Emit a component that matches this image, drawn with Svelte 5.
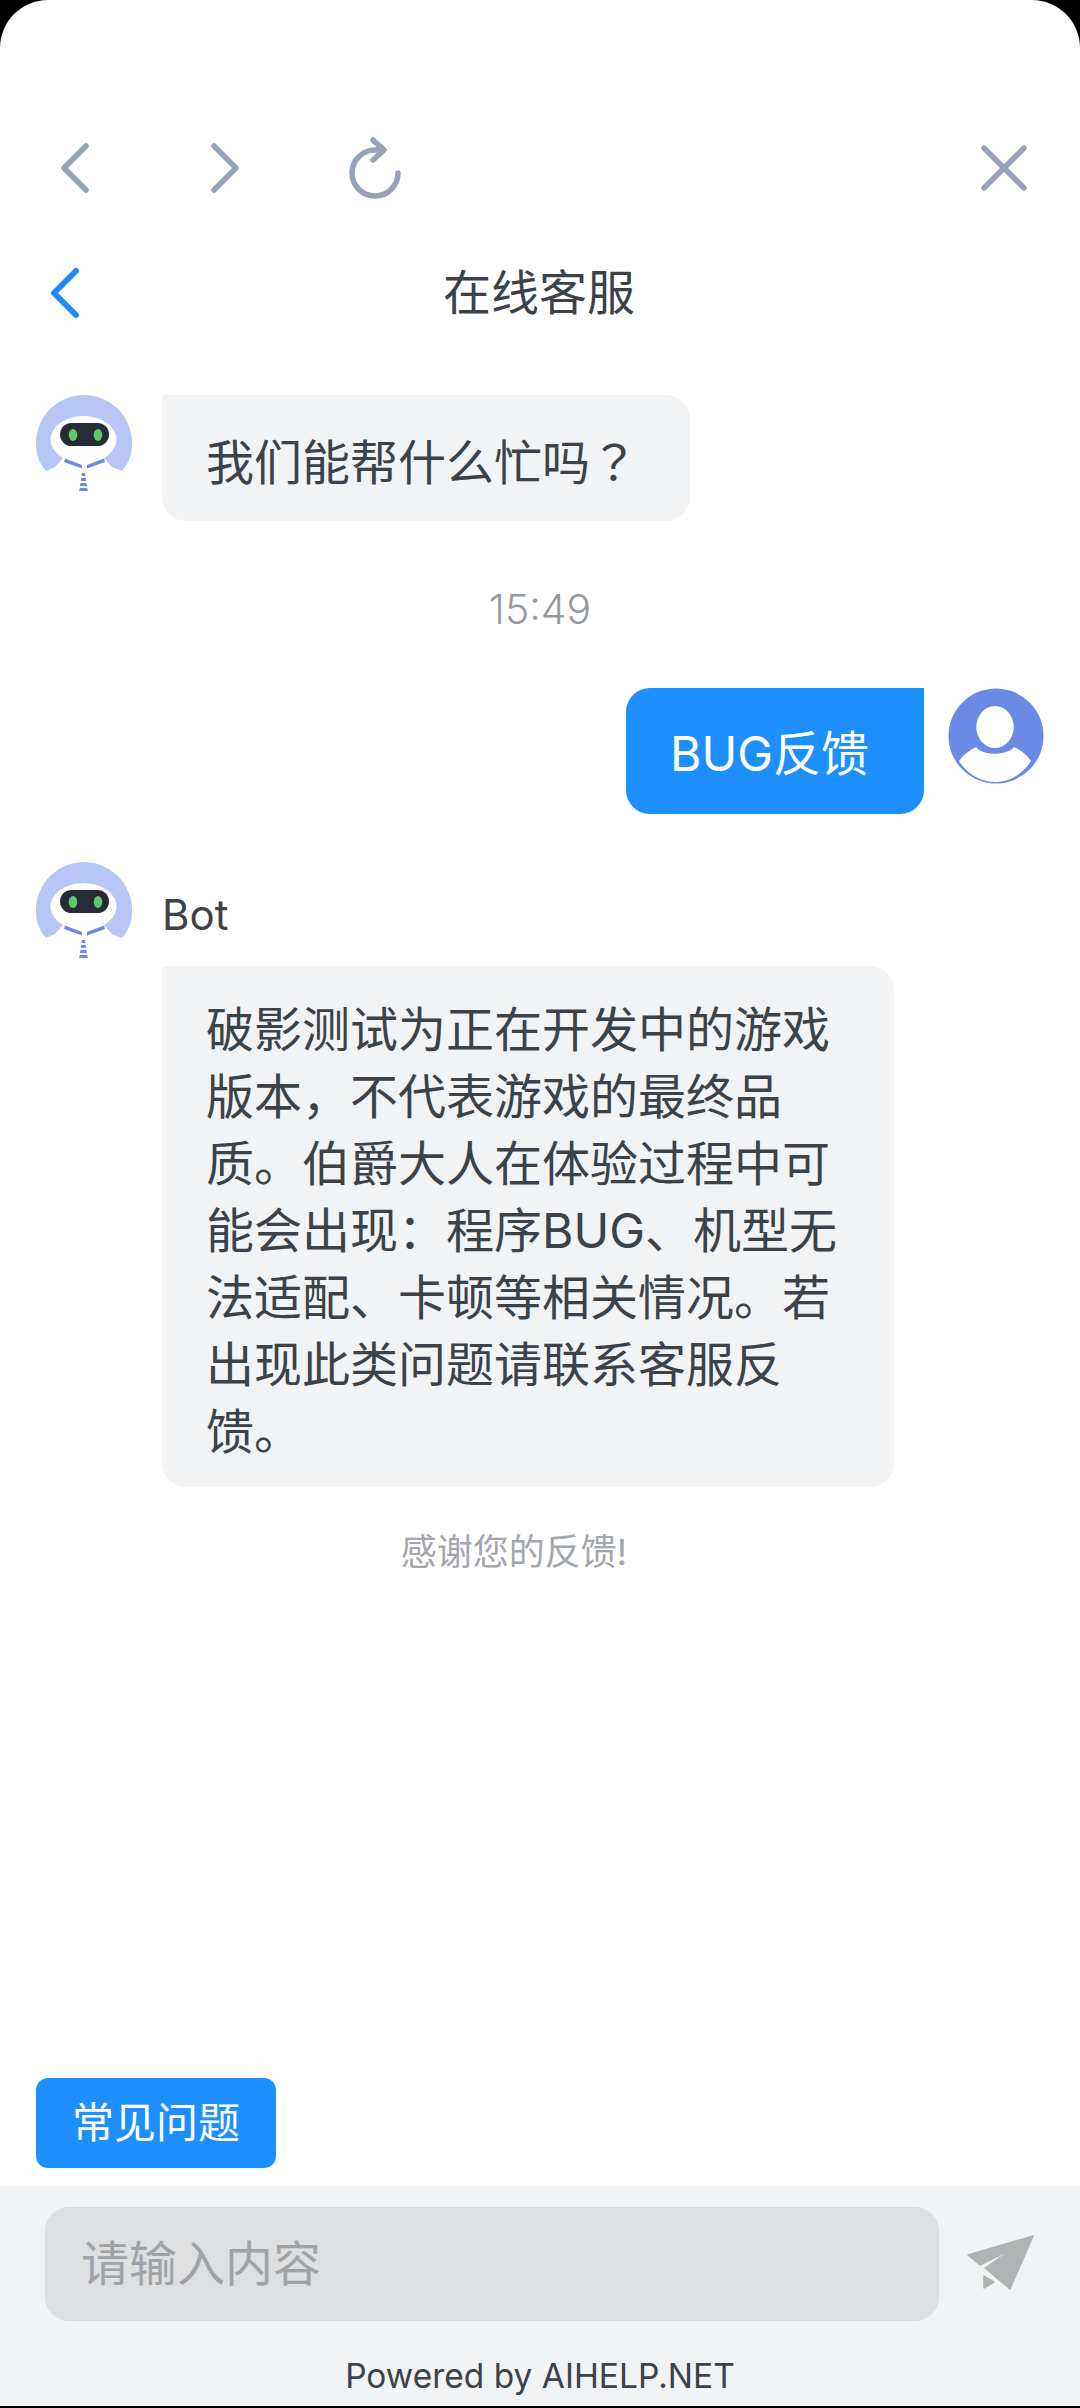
<script>
  const lines = ['破影测试为正在开发中的游戏', '版本，不代表游戏的最终品', '质。伯爵大人在体验过程中可', '能会出现：程序BUG、机型无', '法适配、卡顿等相关情况。若', '出现此类问题请联系客服反', '馈。'];
</script>

{#snippet bot()}
  <svg class="avatar" viewBox="0 0 96 96" aria-hidden="true">
    <path class="bot-halo" d="M10 76 C2 67 0 58 0 48 A48 48 0 0 1 96 48 C96 58 94 67 86 76 L76 72 L68 63 A33 23.5 0 1 0 27 63 L19 72 Z" />
    <rect class="bot-visor" x="24" y="28" width="49" height="23" rx="11.5" />
    <ellipse class="bot-eye" cx="37" cy="40" rx="4.3" ry="6" />
    <ellipse class="bot-eye" cx="62" cy="40" rx="4.3" ry="6" />
    <path class="bot-mark" d="M29 63.5 L46 70 V73.5 L28 67 Z M51 70 L68 63.5 L69 67 L51 73.5 Z" />
    <path class="bot-mark" d="M46 78 H49 L49.5 81 H45.5 Z M45.3 83 H49.7 L50.2 86 H44.8 Z M44.6 88 H50.4 L51 91 H44 Z M43.8 93 H51.2 L52 96 H43 Z" />
  </svg>
{/snippet}

<div class="screen">
  <div class="toolbar">
    <svg class="tool tool-left" viewBox="0 0 30 52"><path d="M26 4 L4 26 L26 48" /></svg>
    <svg class="tool tool-right" viewBox="0 0 30 52"><path d="M4 4 L26 26 L4 48" /></svg>
    <svg class="tool tool-reload" viewBox="0 0 54 62"><path d="M49 36 A23 23 0 1 1 26 13 L34 13 M24 3 L35 13 L24 23" /></svg>
    <span class="spacer"></span>
    <svg class="tool tool-close" viewBox="0 0 48 48"><path d="M4 4 L44 44 M44 4 L4 44" /></svg>
  </div>

  <header class="title-row">
    <svg class="back" viewBox="0 0 30 52"><path d="M26 4 L4 26 L26 48" /></svg>
    <h1>在线客服</h1>
  </header>

  <main class="chat">
    <div class="row first">
      {@render bot()}
      <div class="bubble short">我们能帮什么忙吗<span class="q">？</span></div>
    </div>

    <div class="time">15:49</div>

    <div class="row mine">
      <div class="bubble user">BUG反馈</div>
      <svg class="avatar" viewBox="0 0 96 96" aria-hidden="true">
        <circle cx="48" cy="48" r="47.5" fill="#6a8ae6" />
        <ellipse cx="47" cy="39" rx="18.7" ry="21" fill="#fff" />
        <path d="M11 73 C16 66 22 62 28 59 C34 68 59 68 66 59 C73 62 78 66 83 73 C75 86 61 94 47 94 C33 94 19 86 11 73 Z" fill="#fff" />
      </svg>
    </div>

    <div class="row bot-row">
      {@render bot()}
      <div class="bot-body">
        <div class="name">Bot</div>
        <div class="bubble long">
          {#each lines as line}
            <div>{line}</div>
          {/each}
        </div>
      </div>
    </div>

    <div class="thanks">感谢您的反馈!</div>
  </main>

  <div class="quick-wrap"><button class="quick">常见问题</button></div>

  <footer class="composer">
    <div class="input-row">
      <div class="input">请输入内容</div>
      <svg class="send" viewBox="0 0 68 58" aria-hidden="true">
        <path d="M66 1 L1 20 L13 30 L47 13 L18 33 L43 54 Z" />
        <path d="M17 41 L17 53 L27 47 Z" />
      </svg>
    </div>
    <div class="powered">Powered by AIHELP.NET</div>
  </footer>
</div>

<style>
  :global(body) {
    margin: 0;
    background: #000;
  }

  .screen {
    width: 1080px;
    height: 2406px;
    background: #fff;
    border-radius: 48px 48px 0 0;
    overflow: hidden;
    display: flex;
    flex-direction: column;
    font-family: Inter, "Noto Sans CJK SC", sans-serif;
    color: #3c4248;
  }

  .toolbar {
    height: 84px;
    margin-top: 126px;
    display: flex;
    align-items: center;
    flex: none;
  }

  .tool {
    fill: none;
    stroke: #98a2b6;
    stroke-width: 5.5;
    stroke-linecap: round;
    stroke-linejoin: round;
    flex: none;
  }

  .tool-left {
    width: 30px;
    height: 52px;
    margin-left: 60px;
  }

  .tool-right {
    width: 30px;
    height: 52px;
    margin-left: 120px;
  }

  .tool-reload {
    width: 54px;
    height: 62px;
    margin-left: 109px;
  }

  .spacer {
    flex: 1;
  }

  .tool-close {
    width: 48px;
    height: 48px;
    margin-right: 52px;
  }

  .title-row {
    position: relative;
    height: 84px;
    margin-top: 41px;
    padding-right: 2px;
    display: flex;
    align-items: center;
    justify-content: center;
    flex: none;
  }

  .back {
    position: absolute;
    left: 50px;
    top: 16px;
    width: 30px;
    height: 52px;
    fill: none;
    stroke: #1e8cf0;
    stroke-width: 6;
    stroke-linecap: round;
    stroke-linejoin: round;
  }

  h1 {
    margin: 0;
    font-size: 48px;
    line-height: 84px;
    font-weight: 400;
  }

  .chat {
    flex: 1;
    min-height: 0;
    display: flex;
    flex-direction: column;
    padding: 0 36px;
  }

  .row {
    display: flex;
    align-items: flex-start;
    gap: 30px;
  }

  .first {
    margin-top: 60px;
  }

  .avatar {
    width: 96px;
    height: 96px;
    flex: none;
  }

  .bot-halo {
    fill: #b8c6f5;
  }

  .bot-visor {
    fill: #262b35;
  }

  .bot-eye {
    fill: #5cc96b;
  }

  .bot-mark {
    fill: #6a8ae6;
  }

  .bubble {
    background: #f1f3f5;
    border-radius: 4px 24px 24px 24px;
    font-size: 48px;
    line-height: 67px;
    box-sizing: border-box;
  }

  .q {
    font-family: "Noto Sans CJK JP", sans-serif;
  }

  .short {
    width: 528px;
    height: 126px;
    padding: 31px 44px 0;
    white-space: nowrap;
  }

  .time {
    margin-top: 58px;
    height: 60px;
    line-height: 60px;
    text-align: center;
    font-size: 41px;
    font-weight: 300;
    color: #96999d;
  }

  .mine {
    justify-content: flex-end;
    gap: 24px;
    margin-top: 49px;
  }

  .user {
    background: #1e8fff;
    color: #fff;
    border-radius: 24px 0 24px 24px;
    width: 298px;
    height: 126px;
    padding: 32px 0 0 44px;
    white-space: nowrap;
  }

  .bot-row {
    margin-top: 48px;
  }

  .name {
    height: 102px;
    line-height: 102px;
    font-size: 42px;
    margin-top: 2px;
  }

  .long {
    width: 732px;
    height: 521px;
    padding: 30px 0 0 44px;
    white-space: nowrap;
  }

  .thanks {
    margin-top: 40px;
    padding-right: 52px;
    text-align: center;
    font-size: 36px;
    line-height: 50px;
    color: #a3a6aa;
  }

  .quick-wrap {
    padding: 0 36px 18px;
    flex: none;
  }

  .quick {
    display: block;
    width: 240px;
    height: 90px;
    border: 0;
    padding: 0;
    border-radius: 12px;
    background: #1e8fff;
    color: #fff;
    font: 400 42px/90px Inter, "Noto Sans CJK SC", sans-serif;
  }

  .composer {
    background: #f1f3f5;
    flex: none;
    height: 220px;
    box-sizing: border-box;
    padding-top: 21px;
  }

  .input-row {
    display: flex;
    align-items: center;
    padding: 0 45px;
  }

  .input {
    width: 894px;
    height: 114px;
    line-height: 114px;
    box-sizing: border-box;
    padding-left: 36px;
    background: #dddfe1;
    border-radius: 24px;
    font-size: 48px;
    color: #a0a3a6;
    flex: none;
  }

  .send {
    width: 68px;
    height: 58px;
    margin-left: 28px;
    fill: #b0b3b3;
    stroke: #b0b3b3;
    stroke-width: 1.5;
    stroke-linejoin: round;
    flex: none;
  }

  .powered {
    margin-top: 30px;
    text-align: center;
    font-size: 33.5px;
    line-height: 50px;
    color: #3c4248;
  }
</style>
